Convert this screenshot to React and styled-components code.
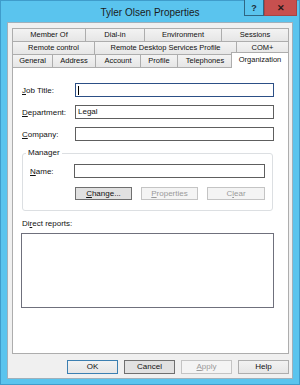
import styled, { createGlobalStyle } from "styled-components";

const GlobalStyle = createGlobalStyle`
  html, body {
    margin: 0;
    padding: 0;
    background: #5ac4ee;
  }
  body {
    font-family: "Liberation Sans", Arial, sans-serif;
    color: #111;
  }
`;

const Window = styled.div`
  width: 300px;
  height: 385px;
  box-sizing: border-box;
  background: #5ac4ee;
  border: 1px solid #3f9ccb;
  padding: 0 6px 5px;
  display: flex;
  flex-direction: column;
`;

const TitleBar = styled.div`
  height: 21px;
  margin: 0 -4px;
  display: grid;
  grid-template-columns: 1fr auto 1fr;
`;

const Title = styled.div`
  grid-column: 2;
  font-size: 10px;
  line-height: 21px;
  color: #1b1b1b;
  padding-top: 1px;
`;

const Controls = styled.div`
  grid-column: 3;
  justify-self: end;
  display: flex;
  margin-top: -1px;
  height: 16px;
`;

const CaptionButton = styled.div`
  width: ${(p) => p.$w}px;
  box-sizing: border-box;
  display: flex;
  align-items: center;
  justify-content: center;
  font-size: 9px;
  font-weight: bold;
  color: ${(p) => (p.$close ? "#2a1a1a" : "#1c2c3a")};
  background: ${(p) => (p.$close ? "#c7504f" : "#5ac4ee")};
  border: 1px solid ${(p) => (p.$close ? "#a84443" : "#2f6683")};
  border-top: none;
`;

const Client = styled.div`
  flex: 1;
  display: flex;
  flex-direction: column;
  background: #f0f0f0;
  border: 1px solid #9fb0bb;
  padding: 5px 3px 4px 4px;
`;

const TabRow = styled.div`
  display: flex;
  height: 13px;
  align-items: flex-end;
`;

const Tab = styled.div`
  width: ${(p) => p.$w}px;
  height: 13px;
  box-sizing: border-box;
  border: 1px solid #adadad;
  border-bottom: none;
  background: linear-gradient(#f3f3f3, #e6e6e6);
  font-size: 7.5px;
  line-height: 12px;
  text-align: center;
  white-space: nowrap;
  overflow: hidden;
  & + & {
    border-left: none;
  }
`;

const ActiveTab = styled(Tab)`
  height: 16px;
  margin-bottom: -1px;
  margin-left: -2px;
  background: #fff;
  line-height: 14px;
  position: relative;
  z-index: 1;
  border-left: 1px solid #adadad !important;
`;

const Panel = styled.div`
  flex: 1;
  background: #fff;
  border: 1px solid #adadad;
  padding: 15px 14px 0 9px;
  display: flex;
  flex-direction: column;
`;

const FieldGrid = styled.div`
  display: grid;
  grid-template-columns: ${(p) => p.$label}px 1fr;
  row-gap: 8px;
  align-items: center;
`;

const Label = styled.label`
  font-size: 8px;
  white-space: nowrap;
`;

const Input = styled.div`
  height: 14px;
  box-sizing: border-box;
  border: 1px solid ${(p) => (p.$focus ? "#2c4f86" : "#5e5e5e")};
  background: #fff;
  font-size: 8px;
  line-height: 12px;
  padding-left: 2px;
  display: flex;
  align-items: center;
`;

const Caret = styled.span`
  width: 1px;
  height: 9px;
  background: #000;
`;

const Group = styled.fieldset`
  margin: 7px 1px 0 0;
  border: 1px solid #dcdfe2;
  border-radius: 3px;
  padding: 6px 7px 10px;
`;

const Legend = styled.legend`
  font-size: 8px;
  line-height: 10px;
  padding: 0 2px;
  margin-left: -4px;
`;

const ButtonRow = styled.div`
  display: flex;
  justify-content: flex-end;
  gap: ${(p) => p.$gap}px;
  margin-top: ${(p) => p.$top}px;
`;

const Button = styled.div`
  width: ${(p) => p.$w}px;
  height: ${(p) => p.$h}px;
  box-sizing: border-box;
  font-size: 8px;
  line-height: ${(p) => p.$h - 2}px;
  text-align: center;
  border: 1px solid
    ${(p) =>
      p.$default ? "#3c7fb1" : p.$disabled ? "#c4c4c4" : p.$dark ? "#6f6f6f" : "#adadad"};
  background: ${(p) =>
    p.$disabled ? "#f4f4f4" : p.$dark ? "#e1e1e1" : "linear-gradient(#f2f2f2, #e6e6e6)"};
  color: ${(p) => (p.$disabled ? "#9a9a9a" : "#111")};
`;

const ListLabel = styled.div`
  font-size: 8px;
  line-height: 10px;
  margin-top: 8px;
`;

const ListBox = styled.div`
  height: 75px;
  box-sizing: border-box;
  margin: 4px 0 0 -1px;
  border: 1px solid #6f707c;
  background: #fff;
`;

const App = () => {
  return (
    <>
      <GlobalStyle />
      <Window>
        <TitleBar>
          <Title>Tyler Olsen Properties</Title>
          <Controls>
            <CaptionButton $w={20}>?</CaptionButton>
            <CaptionButton $w={33} $close>
              ✕
            </CaptionButton>
          </Controls>
        </TitleBar>
        <Client>
          <TabRow>
            <Tab $w={74}>Member Of</Tab>
            <Tab $w={59}>Dial-in</Tab>
            <Tab $w={77}>Environment</Tab>
            <Tab $w={67}>Sessions</Tab>
          </TabRow>
          <TabRow>
            <Tab $w={83}>Remote control</Tab>
            <Tab $w={142}>Remote Desktop Services Profile</Tab>
            <Tab $w={52}>COM+</Tab>
          </TabRow>
          <TabRow>
            <Tab $w={41}>General</Tab>
            <Tab $w={43}>Address</Tab>
            <Tab $w={45}>Account</Tab>
            <Tab $w={37}>Profile</Tab>
            <Tab $w={55}>Telephones</Tab>
            <ActiveTab $w={58}>Organization</ActiveTab>
          </TabRow>
          <Panel>
            <FieldGrid $label={53}>
              <Label>
                <u>J</u>ob Title:
              </Label>
              <Input $focus>
                <Caret />
              </Input>
              <Label>
                <u>D</u>epartment:
              </Label>
              <Input>Legal</Input>
              <Label>
                <u>C</u>ompany:
              </Label>
              <Input />
            </FieldGrid>
            <Group>
              <Legend>Manager</Legend>
              <FieldGrid $label={44}>
                <Label>
                  <u>N</u>ame:
                </Label>
                <Input />
              </FieldGrid>
              <ButtonRow $gap={9} $top={9}>
                <Button $w={57} $h={13} $dark>
                  <u>C</u>hange...
                </Button>
                <Button $w={57} $h={13} $disabled>
                  <u>P</u>roperties
                </Button>
                <Button $w={58} $h={13} $disabled>
                  C<u>l</u>ear
                </Button>
              </ButtonRow>
            </Group>
            <ListLabel>
              Di<u>r</u>ect reports:
            </ListLabel>
            <ListBox />
          </Panel>
          <ButtonRow $gap={6} $top={6}>
            <Button $w={51} $h={14} $default>
              OK
            </Button>
            <Button $w={51} $h={14} $dark>
              Cancel
            </Button>
            <Button $w={51} $h={14} $disabled>
              <u>A</u>pply
            </Button>
            <Button $w={51} $h={14}>
              Help
            </Button>
          </ButtonRow>
        </Client>
      </Window>
    </>
  );
};

export default App;
